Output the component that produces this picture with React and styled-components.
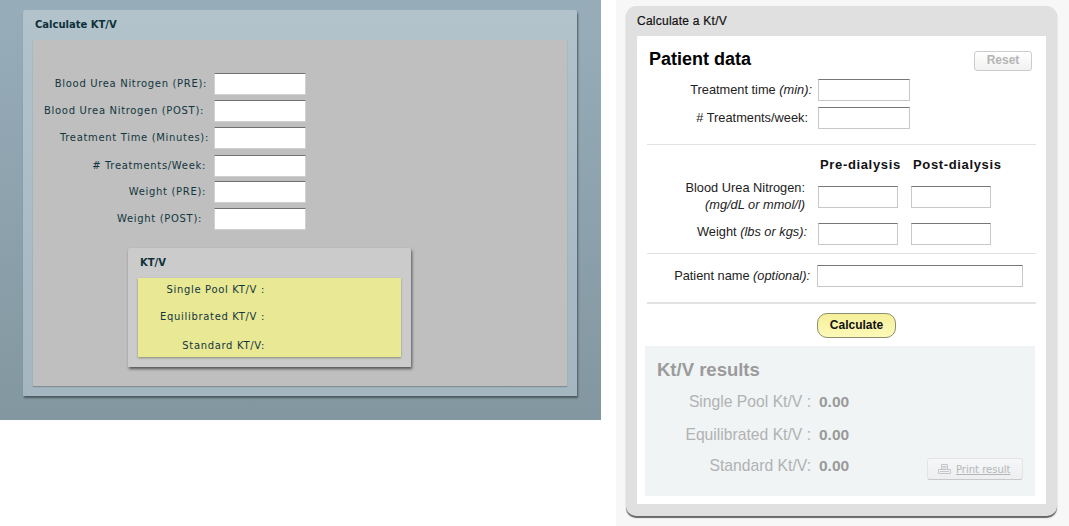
import styled, { createGlobalStyle } from "styled-components";

const Global = createGlobalStyle`
  html, body { margin: 0; padding: 0; background: #fff; }
  body { width: 1069px; height: 526px; overflow: hidden; font-family: "Liberation Sans", Arial, sans-serif; }
`;

const oldRows = [
  { label: "Blood Urea Nitrogen (PRE):", end: 8, h: 27 },
  { label: "Blood Urea Nitrogen (POST):", end: 11, h: 27 },
  { label: "Treatment Time (Minutes):", end: 6, h: 28 },
  { label: "# Treatments/Week:", end: 9, h: 26 },
  { label: "Weight (PRE):", end: 9, h: 27 },
  { label: "Weight (POST):", end: 13, h: 27 },
];

const oldResults = [
  { label: "Single Pool KT/V :", h: 27 },
  { label: "Equilibrated KT/V :", h: 29 },
  { label: "Standard KT/V:", h: 23 },
];

const newResults = [
  { label: "Single Pool Kt/V :", h: 33 },
  { label: "Equilibrated Kt/V :", h: 33 },
  { label: "Standard Kt/V:", h: 30 },
];

function PrinterIcon() {
  return (
    <svg width="13" height="11" viewBox="0 0 13 11" fill="none" stroke="#c4c8ca" strokeWidth="1">
      <path d="M3.5 5.5V.5h6v5" />
      <path d="M.5 5.5h12v4H.5z" />
      <path d="M4.5 2.5h4M4.5 4h4M2 7.5h9" />
    </svg>
  );
}

export default function App() {
  return (
    <Page>
      <Global />
      <OldScreen>
        <OldCard>
          <OldTitle>Calculate KT/V</OldTitle>
          <OldBody>
            <OldForm>
              {oldRows.map((r) => (
                <OldRow key={r.label} $h={r.h}>
                  <OldLabel $end={r.end}>{r.label}</OldLabel>
                  <OldInput />
                </OldRow>
              ))}
            </OldForm>
            <OldResultCard>
              <OldResultTitle>KT/V</OldResultTitle>
              <OldYellow>
                {oldResults.map((r) => (
                  <OldResultRow key={r.label} $h={r.h}>{r.label}</OldResultRow>
                ))}
              </OldYellow>
            </OldResultCard>
          </OldBody>
        </OldCard>
      </OldScreen>

      <NewScreen>
        <NewCard>
          <NewTitle>Calculate a Kt/V</NewTitle>
          <NewBody>
            <HeadRow>
              <PatientHeading>Patient data</PatientHeading>
              <ResetButton>Reset</ResetButton>
            </HeadRow>
            <Row $h={28}>
              <NewLabel $end={6}>Treatment time <em>(min):</em></NewLabel>
              <NewInput $w={92} />
            </Row>
            <Row $h={28}>
              <NewLabel $end={10}># Treatments/week:</NewLabel>
              <NewInput $w={92} />
            </Row>
            <Divider $top={12} />
            <ColumnHeads>
              <ColumnHead $w={93}>Pre-dialysis</ColumnHead>
              <ColumnHead>Post-dialysis</ColumnHead>
            </ColumnHeads>
            <Row $h={36}>
              <NewLabel $end={13}>
                Blood Urea Nitrogen:
                <br />
                <em>(mg/dL or mmol/l)</em>
              </NewLabel>
              <NewInput $w={80} />
              <NewInput $w={80} />
            </Row>
            <Row $h={38}>
              <NewLabel $end={11} $lift={6}>Weight <em>(lbs or kgs):</em></NewLabel>
              <NewInput $w={80} />
              <NewInput $w={80} />
            </Row>
            <Divider $top={0} />
            <Row $h={44}>
              <NewLabel $end={7} $w={172}>Patient name <em>(optional):</em></NewLabel>
              <NewInput $w={206} />
            </Row>
            <Divider $top={4} $double />
            <SubmitRow>
              <CalcButton>Calculate</CalcButton>
            </SubmitRow>
            <ResultPanel>
              <ResultHeading>Kt/V results</ResultHeading>
              <ResultList>
                {newResults.map((r) => (
                  <ResultRow key={r.label} $h={r.h}>
                    <ResultLabel>{r.label}</ResultLabel>
                    <ResultValue>0.00</ResultValue>
                  </ResultRow>
                ))}
                <PrintButton>
                  <PrinterIcon />
                  <span>Print result</span>
                </PrintButton>
              </ResultList>
            </ResultPanel>
          </NewBody>
        </NewCard>
      </NewScreen>
    </Page>
  );
}

const Page = styled.div`
  display: flex;
  align-items: flex-start;
  width: 1069px;
  height: 526px;
`;

/* left, the old version */
const OldScreen = styled.div`
  width: 601px;
  height: 420px;
  box-sizing: border-box;
  padding: 10px 24px 0 23px;
  background: linear-gradient(#97adba, #82979f);
  flex-shrink: 0;
`;
const OldCard = styled.div`
  height: 386px;
  box-sizing: border-box;
  padding: 0 10px 10px;
  background: linear-gradient(#b2c3cc, #a4b6c0);
  border-radius: 3px 3px 0 0;
  box-shadow: 1px 2px 2px #4c5a60;
`;
const OldTitle = styled.div`
  height: 30px;
  padding: 9px 0 0 2px;
  box-sizing: border-box;
  font: bold 10px "DejaVu Sans", sans-serif;
  color: #0e3038;
`;
const OldBody = styled.div`
  height: 346px;
  box-sizing: border-box;
  padding: 33px 0 0 95px;
  background: #bfbfbf;
  box-shadow: 0 1px 1px #7f8c92;
`;
const OldForm = styled.div`
  display: flex;
  flex-direction: column;
  margin-left: -95px;
`;
const OldRow = styled.div`
  display: flex;
  height: ${(p) => p.$h}px;
`;
const OldLabel = styled.div`
  width: 181px;
  box-sizing: border-box;
  padding: 5px ${(p) => p.$end - 1}px 0 0;
  text-align: right;
  font: 10px "DejaVu Sans", sans-serif;
  letter-spacing: 0.67px;
  color: #12363e;
  white-space: nowrap;
`;
const OldInput = styled.div`
  width: 92px;
  height: 22px;
  box-sizing: border-box;
  background: #fff;
  border-top: 1px solid #707070;
  border-left: 1px solid #d0d0d0;
  border-right: 1px solid #d0d0d0;
  border-bottom: 1px solid #d0d0d0;
`;
const OldResultCard = styled.div`
  width: 283px;
  height: 119px;
  box-sizing: border-box;
  margin-top: 13px;
  padding: 0 10px;
  background: #cbcbcb;
  border-radius: 2px 2px 0 0;
  box-shadow: 1px 2px 3px #555;
`;
const OldResultTitle = styled.div`
  height: 30px;
  box-sizing: border-box;
  padding: 9px 0 0 2px;
  font: bold 10px "DejaVu Sans", sans-serif;
  color: #0e3038;
`;
const OldYellow = styled.div`
  height: 79px;
  background: #e9e894;
  box-shadow: 0 1px 2px #8c8c78;
`;
const OldResultRow = styled.div`
  width: 127px;
  height: ${(p) => p.$h}px;
  line-height: 23px;
  text-align: right;
  font-size: 10px;
  font-family: "DejaVu Sans", sans-serif;
  letter-spacing: 0.67px;
  color: #12363e;
  white-space: nowrap;
`;

/* right, the new version */
const NewScreen = styled.div`
  width: 453px;
  height: 526px;
  margin-left: 15px;
  box-sizing: border-box;
  padding: 6px 12px 0 10px;
  background: #f7f7f7;
  flex-shrink: 0;
`;
const NewCard = styled.div`
  height: 510px;
  box-sizing: border-box;
  padding: 0 11px 12px;
  background: #e0e0e0;
  border-radius: 10px;
  box-shadow: 0 2px 1px #666;
`;
const NewTitle = styled.div`
  height: 30px;
  box-sizing: border-box;
  padding-top: 8px;
  font: 12px "Liberation Sans", sans-serif;
  letter-spacing: 0.25px;
  -webkit-text-stroke: 0.2px #111;
  color: #111;
`;
const NewBody = styled.div`
  height: 468px;
  box-sizing: border-box;
  padding: 0 8px;
  background: #fff;
`;
const HeadRow = styled.div`
  display: flex;
  justify-content: space-between;
  align-items: flex-start;
  height: 40px;
  padding: 0 6px 0 4px;
`;
const PatientHeading = styled.h2`
  margin: 13px 0 0;
  font: bold 18px "Liberation Sans", sans-serif;
  color: #000;
`;
const ResetButton = styled.div`
  width: 58px;
  height: 20px;
  margin-top: 15px;
  box-sizing: border-box;
  text-align: center;
  font: bold 12px/17px "Liberation Sans", sans-serif;
  color: #b5b5b5;
  background: linear-gradient(#fff, #f1f1f1);
  border: 1px solid #ccc;
  border-radius: 3px;
`;
const Row = styled.div`
  display: flex;
  align-items: center;
  height: ${(p) => p.$h}px;
`;
const NewLabel = styled.div`
  width: ${(p) => p.$w || 173}px;
  box-sizing: border-box;
  padding-right: ${(p) => p.$end}px;
  padding-bottom: ${(p) => p.$lift || 2}px;
  text-align: right;
  font: 12.8px/17px "Liberation Sans", sans-serif;
  color: #222;
  white-space: nowrap;
  em { font-style: italic; }
`;
const NewInput = styled.div`
  width: ${(p) => p.$w}px;
  height: 22px;
  box-sizing: border-box;
  margin-right: 13px;
  background: #fff;
  border: 1px solid #c8c8c8;
  border-top-color: #777;
`;
const Divider = styled.div`
  margin-top: ${(p) => p.$top}px;
  height: ${(p) => (p.$double ? 2 : 1)}px;
  margin-left: 2px;
  margin-right: 2px;
  background: #e2e2e2;
`;
const ColumnHeads = styled.div`
  display: flex;
  height: 34px;
  padding: 12px 0 0 175px;
  box-sizing: border-box;
`;
const ColumnHead = styled.div`
  ${(p) => p.$w && `width: ${p.$w}px;`}
  font: bold 13px "Liberation Sans", sans-serif;
  letter-spacing: 0.65px;
  color: #111;
  white-space: nowrap;
`;
const SubmitRow = styled.div`
  display: flex;
  justify-content: center;
  height: 42px;
  padding: 9px 0 0 30px;
  box-sizing: border-box;
`;
const CalcButton = styled.div`
  width: 79px;
  height: 25px;
  box-sizing: border-box;
  text-align: center;
  font: bold 12px/22px "Liberation Sans", sans-serif;
  color: #111;
  background: linear-gradient(#f5ef9a, #fdfab8);
  border: 1px solid #8e8e70;
  border-radius: 10px;
`;
const ResultPanel = styled.div`
  height: 150px;
  margin: 0 3px 0 0;
  box-sizing: border-box;
  padding: 13px 12px 0 12px;
  background: #f0f4f5;
`;
const ResultHeading = styled.h3`
  margin: 0;
  height: 26px;
  font: bold 18.5px "Liberation Sans", sans-serif;
  color: #9b9b9b;
`;
const ResultList = styled.div`
  position: relative;
`;
const ResultRow = styled.div`
  display: flex;
  align-items: center;
  height: ${(p) => p.$h}px;
`;
const ResultLabel = styled.div`
  width: 154px;
  text-align: right;
  font: 15.7px "Liberation Sans", sans-serif;
  color: #b0b2b3;
  white-space: nowrap;
`;
const ResultValue = styled.div`
  margin-left: 8px;
  font: bold 15.5px "Liberation Sans", sans-serif;
  color: #9a9a9a;
`;
const PrintButton = styled.div`
  position: absolute;
  right: 0;
  bottom: 1px;
  width: 96px;
  height: 22px;
  box-sizing: border-box;
  display: flex;
  align-items: center;
  gap: 5px;
  padding-left: 10px;
  background: linear-gradient(#f5f7f8, #eceeef);
  border: 1px solid #e2e4e5;
  border-bottom-color: #c8caca;
  border-radius: 3px;
  font: 10px "DejaVu Sans", sans-serif;
  color: #b4b7b8;
  span { text-decoration: underline; }
`;
